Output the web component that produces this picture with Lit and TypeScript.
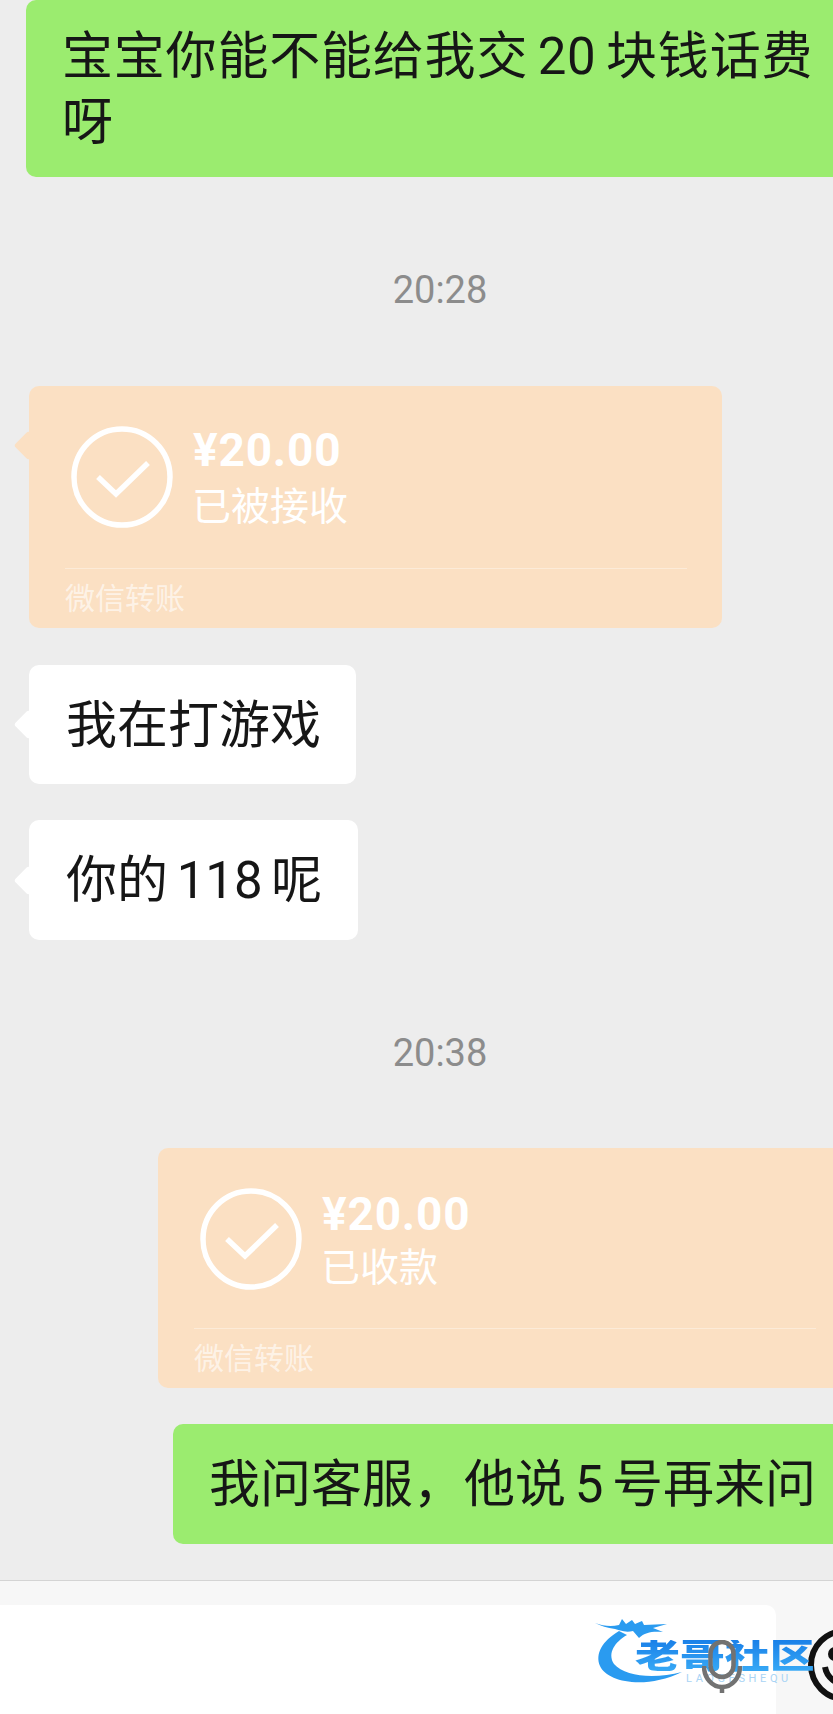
import { LitElement, html, css, svg } from 'lit';
import { customElement } from 'lit/decorators.js';

const checkIcon = svg`<circle cx="51" cy="51" r="48" fill="none" stroke="#fff" stroke-width="5.5"/>
  <path d="M27 51 L45 68 L77 37" fill="none" stroke="#fff" stroke-width="5.5"/>`;

@customElement('app-root')
class AppRoot extends LitElement {
  static styles = css`
    :host {
      display: flex;
      flex-direction: column;
      height: 1714px;
      overflow: hidden;
      position: relative;
      background: #ededed;
      font-family: Roboto, 'Noto Sans CJK SC', sans-serif;
      color: #161616;
    }
    .messages {
      flex: 1;
      display: flex;
      flex-direction: column;
      align-items: flex-start;
      padding-left: 29px;
    }
    .bubble {
      position: relative;
      box-sizing: border-box;
      border-radius: 10px;
      font-size: 51px;
      line-height: 62px;
      word-spacing: -4px;
      padding: 30px 36px 27px 37px;
      white-space: nowrap;
    }
    .white { background: #fff; }
    .green { background: #9bec6f; }
    .first {
      margin-left: -3px;
      width: 830px;
      height: 177px;
      white-space: normal;
      letter-spacing: 0.8px;
      line-height: 66px;
      padding: 24px 20px 21px 36px;
    }
    .tall { height: 120px; }
    .short { padding-right: 35px; }
    .right {
      align-self: flex-end;
      margin-right: -18px;
    }
    .green.right {
      margin-right: -19px;
      padding-left: 36px;
    }
    .tail::before {
      content: '';
      position: absolute;
      left: -11.5px;
      top: 50%;
      width: 21px;
      height: 21px;
      margin-top: -10.5px;
      background: inherit;
      transform: rotate(45deg);
      border-radius: 3px;
    }
    .transfer.tail::before { top: 59px; }
    .time {
      align-self: stretch;
      text-align: center;
      font-size: 38px;
      line-height: 42px;
      color: #8c8c8c;
      padding-left: 18px;
    }
    .transfer {
      position: relative;
      box-sizing: border-box;
      width: 693px;
      height: 242px;
      background: #fbe0c3;
      border-radius: 10px;
      color: #fff;
      padding: 40px 35px 0 36px;
      display: flex;
      flex-direction: column;
    }
    .head {
      display: flex;
      align-items: center;
      gap: 20px;
      padding-left: 6px;
      height: 102px;
    }
    .head svg { width: 102px; height: 102px; flex: none; }
    .amount {
      font-size: 46px;
      line-height: 54px;
      font-weight: 700;
      letter-spacing: 0.8px;
    }
    .status {
      font-size: 39px;
      line-height: 48px;
      margin: 6px 0 0 -1px;
    }
    .foot {
      margin-top: 40px;
      border-top: 1px solid rgba(255, 255, 255, 0.35);
      font-size: 30px;
      line-height: 60px;
      color: rgba(255, 255, 255, 0.62);
    }
    .compact { height: 240px; }
    .compact .status { margin-top: 3px; }
    .compact .foot { margin-top: 38px; }
    .bar {
      height: 134px;
      box-sizing: border-box;
      border-top: 1px solid #d4d4d4;
      background: #f7f7f7;
      padding-top: 24px;
      display: flex;
      gap: 32px;
    }
    .input {
      width: 776px;
      flex: none;
      background: #fff;
      border-radius: 0 10px 0 0;
      display: flex;
      justify-content: flex-end;
      padding: 35px 34px 0 0;
      box-sizing: border-box;
    }
    .mic { width: 40px; height: 54px; position: relative; z-index: 2; }
    .smile { width: 74px; height: 74px; flex: none; margin-top: 23px; }
    .logo {
      position: absolute;
      left: 595px;
      top: 1618px;
      width: 225px;
      height: 72px;
    }
    .logo svg { position: absolute; left: 0; top: 0; width: 90px; height: 72px; }
    .logo-name {
      position: absolute;
      left: 40px;
      top: 22px;
      font-size: 34px;
      line-height: 32px;
      font-weight: 900;
      white-space: nowrap;
      transform: scaleX(1.32);
      transform-origin: left top;
      background: linear-gradient(#1a80e8, #38aaf6);
      -webkit-background-clip: text;
      background-clip: text;
      color: transparent;
    }
    .logo-sub {
      position: absolute;
      left: 91px;
      top: 55px;
      font-size: 11px;
      line-height: 11px;
      letter-spacing: 3.6px;
      color: #a9d4f5;
      white-space: nowrap;
    }
  `;

  private transfer(status: string, cls = '') {
    return html`<div class="transfer ${cls}">
      <div class="head">
        <svg viewBox="0 0 102 102">${checkIcon}</svg>
        <div>
          <div class="amount">¥20.00</div>
          <div class="status">${status}</div>
        </div>
      </div>
      <div class="foot">微信转账</div>
    </div>`;
  }

  render() {
    return html`
      <div class="messages">
        <div class="bubble green first">宝宝你能不能给我交 20 块钱话费呀</div>
        <div class="time" style="margin-top:92px">20:28</div>
        <div style="margin-top:75px">${this.transfer('已被接收', 'tail')}</div>
        <div class="bubble white tail short" style="margin-top:37px">我在打游戏</div>
        <div class="bubble white tail tall" style="margin-top:36px">你的 118 呢</div>
        <div class="time" style="margin-top:92px">20:38</div>
        <div class="right" style="margin-top:74px">${this.transfer('已收款', 'compact')}</div>
        <div class="bubble green right tall" style="margin-top:36px">我问客服，他说 5 号再来问</div>
      </div>
      <div class="bar">
        <div class="input">
          <svg class="mic" viewBox="0 0 40 54" fill="none" stroke="#727272" stroke-width="4.5">
            <rect x="8.5" y="2" width="23" height="35" rx="11.5"/>
            <path d="M2 26 C2 38 10 47 20 47 C30 47 38 38 38 26 M20 47 V53"/>
          </svg>
        </div>
        <svg class="smile" viewBox="0 0 74 74" fill="none" stroke="#111" stroke-width="6">
          <circle cx="37" cy="37" r="34"/>
          <circle cx="27" cy="26" r="7" fill="#111" stroke="none"/>
          <path d="M17 39 C19 50 28 56 37 56 C46 56 55 50 57 39"/>
        </svg>
      </div>
      <div class="logo">
        <svg viewBox="0 0 90 72" fill="#2a9bf0">
          <path d="M24 13 C7 23 0 36 5 48 C12 64 50 72 87 54 C60 61 30 59 19 46 C12 35 20 24 32 17 Z"/>
          <path d="M0 5 C8 8 16 9 24 7 L27 1 L31 6 L37 2 L40 6 L47 3 L49 7 L72 6 L58 10 L68 14 C58 13 50 14 44 20 L38 13 C30 15 24 12 20 11 C12 10 6 8 0 5 Z"/>
        </svg>
        <div class="logo-name">老哥社区</div>
        <div class="logo-sub">LAOGESHEQU</div>
      </div>
    `;
  }
}
